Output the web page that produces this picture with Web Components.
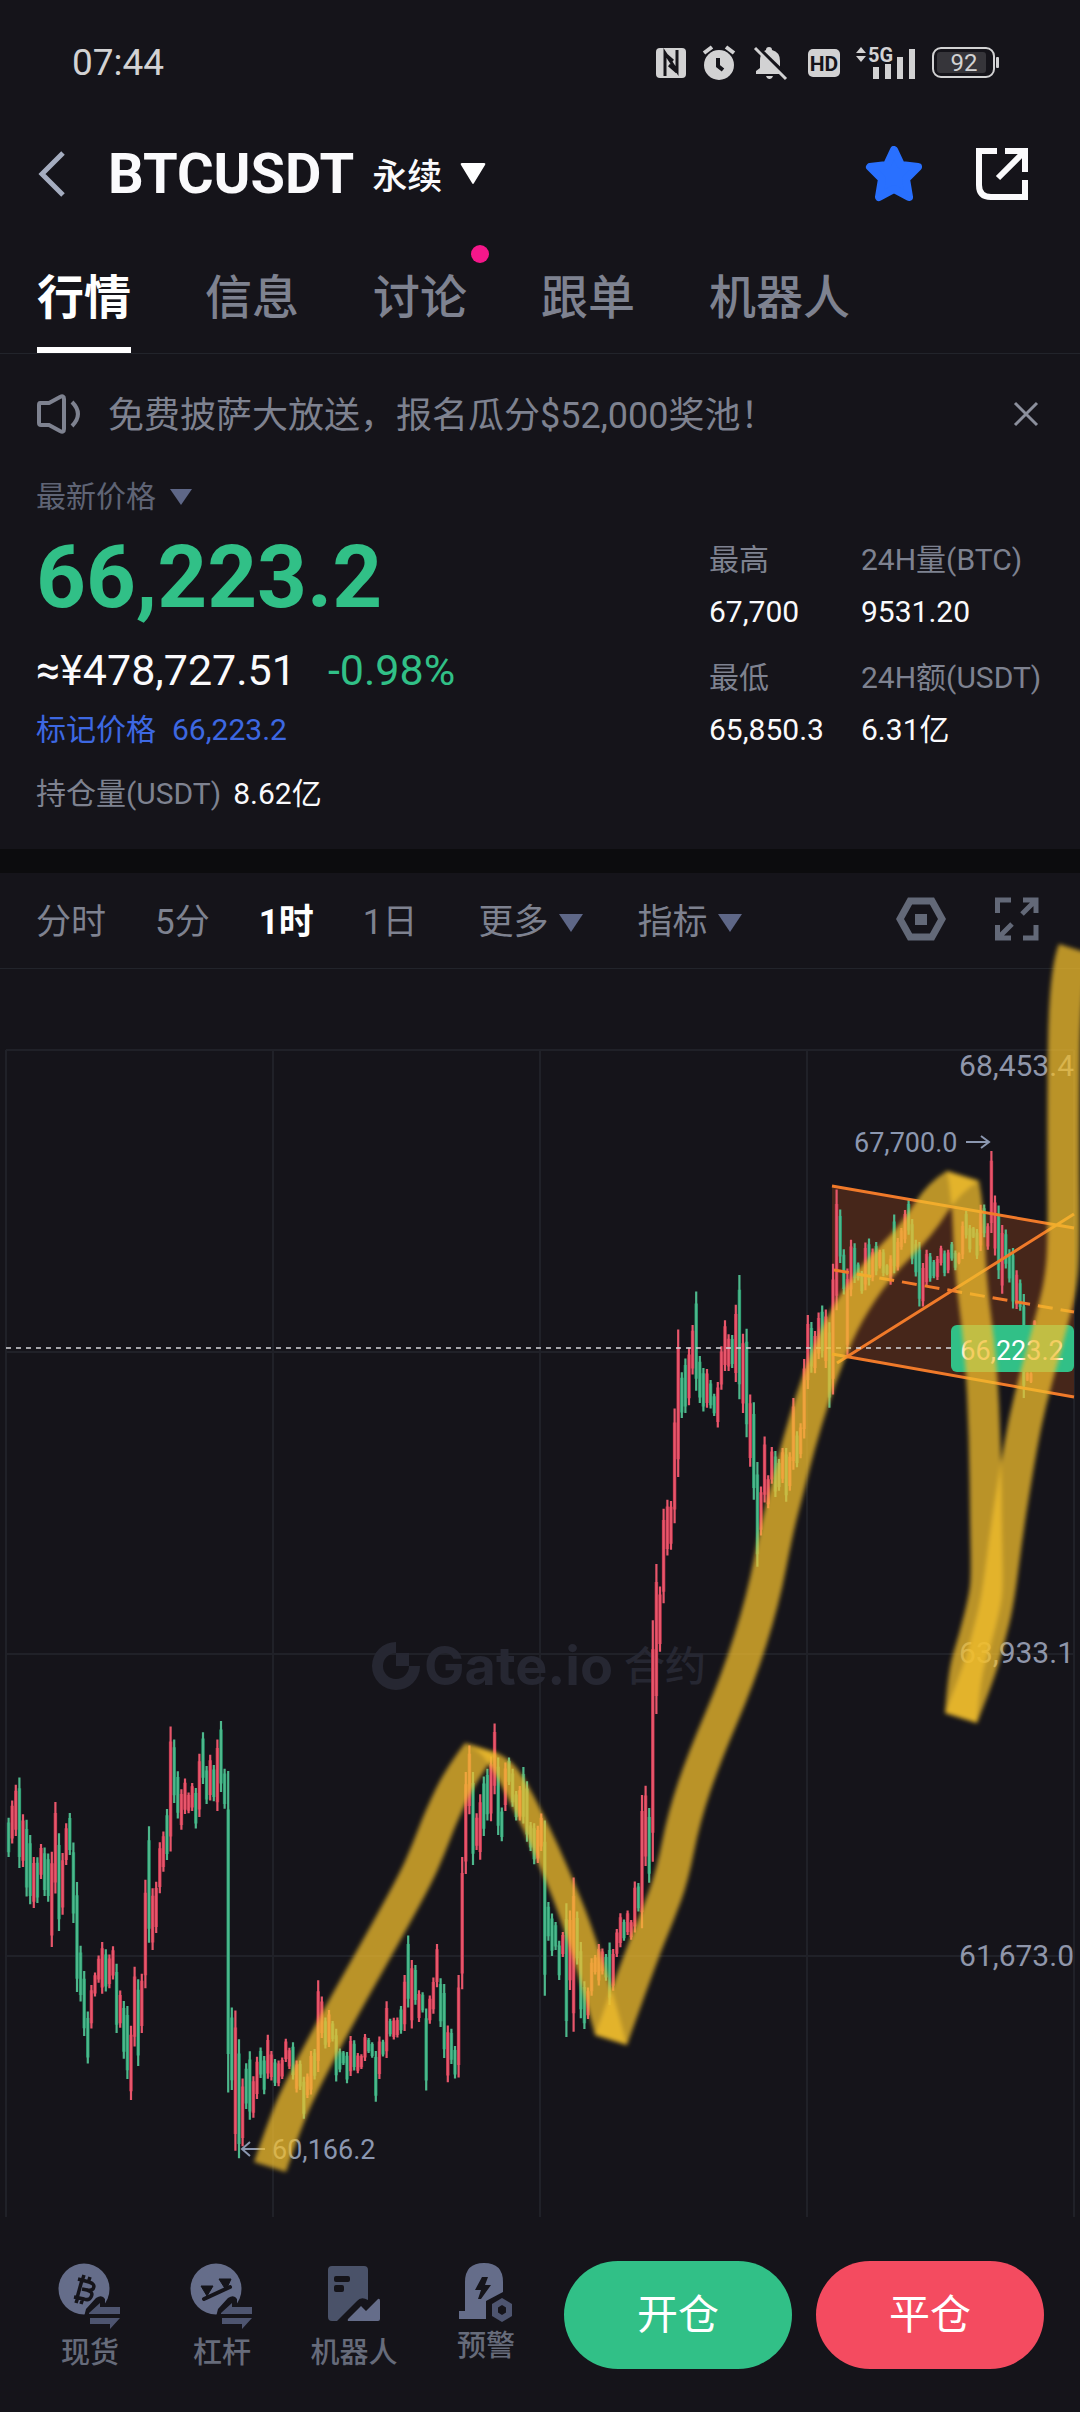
<!DOCTYPE html>
<html lang="zh-CN">
<head>
<meta charset="utf-8">
<meta name="viewport" content="width=device-width">
<title>BTCUSDT 永续</title>
<style>
  html { background: #15141a; }
  body {
    margin: 0;
    color: #fafafc;
    font-family: Roboto, "Noto Sans CJK SC", sans-serif;
    --muted: #7e8290;
    --slate: #5e6787;
    --line: #22242b;
    --up: #31c087;
    --down: #f44b60;
    --pad: 36px;
  }
</style>
</head>
<body>
<trade-screen></trade-screen>
<script>
const base = `
  :host { display: block; }
  * { box-sizing: border-box; }
  svg { display: block; flex: none; }
  button { background: none; border: 0; padding: 0; margin: 0; font: inherit; color: inherit; cursor: pointer; }
  a { color: inherit; text-decoration: none; }
`;
function define(name, css, html, init) {
  customElements.define(name, class extends HTMLElement {
    constructor() {
      super();
      this.attachShadow({ mode: "open" }).innerHTML = `<style>${base}${css}</style>${html}`;
      if (init) init(this.shadowRoot, this);
    }
  });
}

define("trade-screen", `
  :host { overflow-x: clip; }
  .band { height: 24px; background: #0c0c0e; }
`, `
  <status-bar></status-bar>
  <pair-header></pair-header>
  <section-tabs></section-tabs>
  <notice-bar>免费披萨大放送，报名瓜分$52,000奖池！</notice-bar>
  <price-summary></price-summary>
  <div class="band"></div>
  <chart-toolbar></chart-toolbar>
  <price-chart></price-chart>
  <trade-dock></trade-dock>
`);

define("status-bar", `
  :host { display: flex; align-items: center; justify-content: space-between; height: 126px; padding: 0 80px 0 72px; color: #d2d2d3; }
  .time { font-size: 37px; line-height: 48px; }
  .icons { display: flex; align-items: center; gap: 16px; }
  .icons svg { overflow: visible; }
  text { font-family: Roboto, sans-serif; }
`, `
  <span class="time">07:44</span>
  <div class="icons">
    <svg width="30" height="32" viewBox="0 0 30 32" aria-label="NFC"><rect y="1" width="30" height="30" rx="4" fill="#d2d2d3"/><path d="M9 29V6L21 24V3M9 7L17 14M21 25L13 18" stroke="#15141a" stroke-width="3" fill="none"/></svg>
    <svg width="34" height="36" viewBox="0 0 34 36" aria-label="闹钟"><circle cx="17" cy="20" r="15" fill="#d2d2d3"/><path d="M2 8L10 2M32 8L24 2" stroke="#d2d2d3" stroke-width="4"/><path d="M16 13V21L21 25" stroke="#15141a" stroke-width="4" fill="none"/></svg>
    <svg width="36" height="36" viewBox="0 0 36 36" aria-label="静音"><path d="M17 2q3 0 3 3q8 2 8 11v7l4 3v3H4v-3l4-3v-7q0-9 6-11q0-3 3-3zM14 31h7q-1 3-3.500 3t-3.500-3z" fill="#d2d2d3"/><path d="M5 2L36 32" stroke="#15141a" stroke-width="4"/><path d="M3 3L34 34" stroke="#d2d2d3" stroke-width="3"/></svg>
    <svg width="36" height="32" viewBox="-4 0 36 32"><rect y="2" width="32" height="28" rx="5" fill="#d2d2d3"/><text x="16" y="24" font-size="21" font-weight="700" text-anchor="middle" fill="#15141a">HD</text></svg>
    <svg width="60" height="42" viewBox="0 -4 60 42"><path d="M0 7L5 1L10 7zM0 10L5 16L10 10z" fill="#d2d2d3"/><path d="M17 21h6v12h-6zM29 18h6v15h-6zM41 11h6v22h-6zM53 3h6v30h-6z" fill="#d2d2d3"/><text x="12" y="16" font-size="20" font-weight="700" fill="#d2d2d3">5G</text></svg>
    <svg width="68" height="32" viewBox="0 0 68 32"><rect x="1" y="1" width="61" height="29" rx="8" fill="none" stroke="#d2d2d3" stroke-width="2"/><rect x="5" y="5" width="49" height="21" rx="3" fill="#36353a"/><rect x="64" y="10" width="3" height="11" rx="1" fill="#d2d2d3"/><text x="32" y="24" font-size="24" text-anchor="middle" fill="#d2d2d3">92</text></svg>
  </div>
`);

define("pair-header", `
  :host { display: flex; align-items: center; height: 98px; padding: 0 var(--pad) 2px; }
  .pair { display: flex; align-items: center; gap: 18px; margin: 0 auto 0 42px; line-height: 66px; }
  h1 { margin: 0; font-size: 56px; font-weight: 700; line-height: 66px; }
  .kind { font-size: 35px; line-height: 58px; padding-top: 8px; font-weight: 500; }
  .share { margin-left: 53px; margin-right: 16px; }
`, `
  <button aria-label="返回"><svg width="30" height="46" viewBox="0 0 30 46"><path d="M27 2L6 23L27 44" fill="none" stroke="#a5adc0" stroke-width="5"/></svg></button>
  <button class="pair"><h1>BTCUSDT</h1><span class="kind">永续</span><svg width="26" height="22" viewBox="0 0 26 22"><path d="M1 2Q0 0 2 0H24Q26 0 25 2L14 20Q13 22 12 20z" fill="#fff"/></svg></button>
  <button aria-label="收藏"><svg width="58" height="56" viewBox="0 0 58 56"><path d="M29 4L36 19L53 21L41 33L44 51L29 43L14 51L17 33L5 21L22 19z" fill="#2970ff" stroke="#2970ff" stroke-width="8" stroke-linejoin="round"/></svg></button>
  <button class="share" aria-label="分享"><svg width="52" height="52" viewBox="0 0 52 52"><path d="M21 3H3V37Q3 49 15 49H49V32M29 3H49V24M48 4L22 30" fill="none" stroke="#fafafc" stroke-width="6"/></svg></button>
`);

define("tab-item", `
  :host { color: #7e8290; font-size: 47px; font-weight: 500; }
  a { display: block; position: relative; line-height: 60px; padding-bottom: 25px; white-space: nowrap; }
  :host([active]) { color: #fff; font-weight: 700; }
  :host([active]) a { padding-bottom: 19px; border-bottom: 6px solid #fff; }
  :host([dot]) a::after { content: ""; position: absolute; top: -23px; right: -22px; width: 18px; height: 18px; border-radius: 50%; background: #f5178a; }
`, `<a href="#"><slot></slot></a>`);

define("section-tabs", `
  nav { display: flex; gap: 74px; padding: 44px 37px 0; border-bottom: 1px solid var(--line); }
`, `<nav><tab-item active>行情</tab-item><tab-item>信息</tab-item><tab-item dot>讨论</tab-item><tab-item>跟单</tab-item><tab-item>机器人</tab-item></nav>`);

define("notice-bar", `
  :host { display: flex; align-items: center; height: 120px; padding: 0 var(--pad); color: #7e8290; }
  p { flex: 1; margin: 0 0 0 26px; padding-top: 3px; font-size: 36px; line-height: 48px; }
  .close { margin-right: 5px; }
`, `
  <svg width="46" height="40" viewBox="0 0 46 40"><path d="M4 9Q3 9 3 11V29Q3 31 5 31H13L24 37Q28 39 28 35V5Q28 1 24 3L13 9zM36 8Q48 20 36 32" fill="none" stroke="#7e8290" stroke-width="4"/></svg>
  <p><slot></slot></p>
  <button class="close" aria-label="关闭"><svg width="26" height="26" viewBox="0 0 26 26"><path d="M2 2L24 24M24 2L2 24" stroke="#8b8f9c" stroke-width="3"/></svg></button>
`);

define("stat-item", `
  dl, dt, dd { margin: 0; }
  dt, dd { font-size: 30px; line-height: 48px; white-space: nowrap; }
  dt { color: #7e8290; margin-bottom: 4px; }
  dd { color: #fafafc; }
`, `<dl><dt><slot name="label"></slot></dt><dd><slot></slot></dd></dl>`);

define("price-summary", `
  :host { display: flex; padding: 0 var(--pad) 31px; font-size: 30px; line-height: 48px; }
  .main { flex: 1; }
  .pick { display: flex; align-items: center; gap: 14px; line-height: 46px; color: #5f6475; }
  .last { color: var(--up); font-size: 87px; font-weight: 700; line-height: 114px; }
  .fiat { display: flex; gap: 32px; font-size: 43px; line-height: 72px; }
  .fiat b { font-weight: 400; color: var(--up); }
  .mark { display: flex; gap: 16px; color: #3d68e2; }
  .hold { margin-top: 16px; display: flex; gap: 12px; }
  .hold span { color: #7e8290; }
  .stats { width: 335px; padding-top: 62px; display: grid; grid-template-columns: 152px 1fr; row-gap: 18px; align-content: start; }
`, `
  <div class="main">
    <button class="pick">最新价格<svg width="22" height="16" viewBox="0 0 22 16"><path d="M0 0H22L11 16z" fill="#5e6787"/></svg></button>
    <div class="last">66,223.2</div>
    <div class="fiat"><span>≈¥478,727.51</span><b>-0.98%</b></div>
    <div class="mark"><span>标记价格</span><span>66,223.2</span></div>
    <div class="hold"><span>持仓量(USDT)</span>8.62亿</div>
  </div>
  <div class="stats">
    <stat-item><span slot="label">最高</span>67,700</stat-item>
    <stat-item><span slot="label">24H量(BTC)</span>9531.20</stat-item>
    <stat-item><span slot="label">最低</span>65,850.3</stat-item>
    <stat-item><span slot="label">24H额(USDT)</span>6.31亿</stat-item>
  </div>
`);

define("chart-toolbar", `
  :host { display: flex; align-items: center; height: 96px; padding: 0 40px 0 var(--pad); border-bottom: 1px solid var(--line); font-size: 35px; line-height: 48px; color: #7e8290; }
  .frames { display: flex; gap: 49px; flex: 1; padding-top: 4px; }
  .frames [aria-pressed] { color: #fff; font-weight: 700; }
  .menu { display: flex; align-items: center; gap: 10px; margin-left: 12px; }
  .menu + .menu { margin-left: 4px; }
  .tools { display: flex; align-items: center; gap: 48px; padding-bottom: 3px; }
`, `
  <div class="frames">
    <button>分时</button><button>5分</button><button aria-pressed="true">1时</button><button>1日</button>
    <button class="menu">更多<svg width="26" height="18" viewBox="0 0 26 18"><path d="M1 0H25L13 18z" fill="#5e6787"/></svg></button>
    <button class="menu">指标<svg width="26" height="18" viewBox="0 0 26 18"><path d="M1 0H25L13 18z" fill="#5e6787"/></svg></button>
  </div>
  <div class="tools">
    <button aria-label="设置"><svg width="50" height="44" viewBox="0 0 50 44"><path d="M14 4H36L46 22L36 40H14L4 22z" fill="none" stroke="#636978" stroke-width="7"/><path d="M19 17h12v11H19z" fill="#636978"/></svg></button>
    <button aria-label="全屏"><svg width="46" height="44" viewBox="-1 0 46 44"><path d="M2.500 16V3H16M28 3H41V16M40 4L27 17M41 28V41H28M2.500 28V41H16M4 40L17 27" fill="none" stroke="#636978" stroke-width="5"/></svg></button>
  </div>
`);

/* Hourly candles: colour letter, high, low. Each run carries its own start, offset and vertical scale. */
const runs = [
  { x: 8.6, y: 1680, k: 2.904, d: "g400 514,r350 475,r304 453,g283 546,r390 543,g406 629,g450 651,r514 662,g515 648,r476 578,g486 627,g504 644,r499 775,r354 620,g445 729,r502 682,r416 537,g386 508,g472 706,g587 906,g772 934,g845 1034,g963 1114,r886 1012,r849 919,r800 879,r761 911,g782 905,r797 895,r773 870,g824 1025,r902 1010,g932 1100,g947 1159,r1004 1220,r833 1064,g869 1121,r853 1025,r580 895,g425 763,r605 784,r586 735,r471 619,r440 557,g375 523,r135 498,g173 357,g265 402,r317 435,r286 389,r327 387,r299 380,g314 431,r214 398,g152 302,g250 360,r217 350,g247 352,r173 380,g119 325,g258 374,g264 1198,g951 1191,r960 1367,g1043 1389,r1157 1354,g1113 1246,g1078 1277,r1151 1271,r1094 1217,g1067 1156,g1092 1203,r1030 1158,r1077 1163,g1101 1179,r1105 1180,r1096 1159,r1042 1109,r1068 1130,g1052 1160,r1105 1198,g1105 1191,g1152 1274,r1143 1214,r1077 1204,g1072 1160,r872 1138,r919 1040,g980 1070,r958 1066,g990 1050,g1013 1166,g1070 1139,g1077 1118,g1080 1171,r1034 1150,g1046 1134,r1083 1142,r1087 1130,r1028 1106,g1040 1083,g1052 1097,g1077 1225,r1035 1159,g1045 1093,r933 1098,g984 1035,r981 1044,r980 1038,g947 1027,r857 1019,g742 951,r813 1012,g828 943,r901 993,g907 966,g954 1192,r916 998,r864 969,r767 892,g866 1008,g883 1098,r1003 1168,g1013 1115,g1063 1157,r857 1154,r514 898,r267 563,r190 390,g267 537,r387 494,r332 522,g280 453,g258 408,r222 410,r126 332,g225 450,g370 468,r240 380,g225 305,g258 368,g322 408,r308 408,g253 417,g294 470,g412 497,g416 535,r423 531" },
  { x: 541.2, y: 1600, k: 2.529, d: "r540 635,g558 1001,g764 862,g793 900,g814 885,g862 961,r840 903,g767 1105,r785 986,r702 1092,g788 922,g865 1058,g964 1085,r980 1060,r906 1001,r898 947,r870 975,r881 947,g895 963,g866 1024,r883 988,r832 903,r792 878,g808 862,r785 847,r809 859,r712 841,g716 788,r493 830,r470 673,g526 715,r51 662,r-91 288,r-34 131,r-231 8" },
  { x: 667.4, y: 930, k: 2.34, d: "r1333 1464,r1336 1450,r1120 1388,r935 1280,g1035 1142,g1003 1130,r977 1112,r924 1040,g846 1078,g997 1107,g1025 1127,r1027 1118,g1053 1120,g1085 1137,r1058 1164,r974 1076,r913 1032,r946 1032,g948 1025,r877 1058,g807 1098,r945 1130,g933 1187,r1087 1256,g1105 1333,g1245 1490,r1302 1417,r1185 1340,r1276 1353,r1210 1296,g1219 1327,g1238 1312,r1212 1294,g1212 1338,r1222 1312,r1095 1263,g1173 1257,r1154 1236,r1004 1190,r901 1074,g917 1036,r938 1037,r895 1004,g879 1000,r888 1025,g918 1118,r781 1087,r607 890,g654 779,g747 853,r792 995,r725 857,g733 826,g778 820,g798 851,r731 843,g722 832,r745 822,g730 808,r748 792,g747 810,g782 808,r761 830,g666 803,r721 797,r697 748,r655 733,g631 713,g676 782,g725 811,g730 881,r779 881,r748 834,g756 823,g772 815,r763 819,r739 785,g750 810,r748 803,g730 774,g750 796,r755 782,r682 770,g657 722,g690 755,g695 721,g700 770,r643 751,g642 719,r686 748,r517 709,r621 762,g645 817,r690 851,g701 792,g747 825,g744 886,r796 887,g818 891,g852 1095,r1035 1055,r1035 1060,r913 935" }
];
const STEP = 3.6;
function candlePaths() {
  const wick = { r: "", g: "" }, body = { r: "", g: "" };
  for (const run of runs) {
    run.d.split(",").forEach((c, i) => {
      const side = c[0], [hi, lo] = c.slice(1).split(" ").map(v => run.y + v / run.k);
      const x = (run.x + STEP * i).toFixed(1), inset = (lo - hi) * 0.12;
      wick[side] += `M${x} ${hi.toFixed(1)}V${lo.toFixed(1)}`;
      body[side] += `M${x} ${(hi + inset).toFixed(1)}V${(lo - inset).toFixed(1)}`;
    });
  }
  return `<g fill="none"><path d="${body.g}" stroke="#1c8a60" stroke-width="3.500"/><path d="${body.r}" stroke="#b43048" stroke-width="3.500"/>
    <path d="${wick.g}" stroke="#4db88c" stroke-width="2.200"/><path d="${wick.r}" stroke="#e8566b" stroke-width="2.200"/></g>`;
}
/* Highlighter: a flat nib of half-size (16, 5) swept along each centre line. */
const marks = [
  [[270,2167],[285,2123],[303,2083],[341,2012],[375,1952],[415,1880],[429,1848],[442,1814],[462,1773],[481,1748]],
  [[481,1748],[494,1754],[510,1776],[526,1807],[542,1840],[558,1877],[574,1916],[596,1984],[611,2040]],
  [[611,2040],[641,1956],[658,1915],[672,1877],[684,1817],[704,1758],[738,1679],[763,1600],[777,1528],[788,1486],[799,1443],[812,1400],[827,1357],[846,1315],[875,1272],[917,1230],[944,1187],[963,1176]],
  [[963,1176],[968,1203],[970,1272],[981,1357],[985,1443],[986,1528],[987,1580],[985,1600],[975,1640],[964,1675],[961,1718]],
  [[961,1718],[978,1675],[988,1640],[998,1600],[1007,1528],[1021,1443],[1030,1400],[1042,1357],[1053,1315],[1060,1288],[1064,1250],[1063,1127],[1065,973],[1075,949]]
];
function markPaths() {
  return marks.map(m => {
    /* midpoints are the knots of a quadratic curve, so each edge stays smooth */
    const edge = (pts, dx, dy) => {
      const p = pts.map(([x, y]) => [x + dx, y + dy]);
      let s = `${p[0]}`;
      for (let i = 1; i < p.length - 1; i++) {
        const end = i === p.length - 2 ? p[i + 1] : [(p[i][0] + p[i + 1][0]) / 2, (p[i][1] + p[i + 1][1]) / 2];
        s += `Q${p[i]} ${end}`;
      }
      return s;
    };
    return `<path d="M${edge(m, -16, -5)}L${edge([...m].reverse(), 16, 5)}Z"/>`;
  }).join("");
}

define("price-chart", `
  svg { width: 100%; height: auto; overflow: visible; pointer-events: none; position: relative; }
  text { font-family: Roboto, "Noto Sans CJK SC", sans-serif; }
`, `<svg viewBox="0 969 1080 1248" role="img" aria-label="BTCUSDT 1时 K线">
  <defs><filter id="soft" x="-10%" y="-10%" width="120%" height="120%"><feGaussianBlur stdDeviation="2"/></filter></defs>
  <path d="M6 1050V2217M273 1050V2217M540 1050V2217M807 1050V2217M1074 1050V2217M6 1050H1074M6 1352H1074M6 1654H1074M6 1956H1074" stroke="#202128" stroke-width="2" fill="none"/>
  <g fill="#262732">
    <path d="M396 1642A24 24 0 1 0 420 1666H409A13 13 0 1 1 396 1653z"/><path d="M396 1653h13v13h-13z"/>
    <text x="424" y="1685" font-size="54" font-weight="700" style="font-family:Inter,sans-serif">Gate.io</text>
    <text x="624" y="1681" font-size="41" font-weight="500">合约</text>
  </g>
  <path d="M832 1186L1074 1228V1397L832 1354z" fill="#46261a"/>
  ${candlePaths()}
  <g stroke="#f07a2a" stroke-width="3" fill="none"><path d="M832 1186L1074 1228M832 1354L1074 1397M837 1363L1074 1214"/><path d="M834 1270L1074 1312" stroke-dasharray="15 8"/></g>
  <path d="M6 1348H951" stroke="#d5d5da" stroke-width="1.500" stroke-dasharray="5 5"/>
  <g fill="#8f96aa" font-size="30" text-anchor="end">
    <text x="1074" y="1076">68,453.4</text><text x="1074" y="1663">63,933.1</text><text x="1074" y="1966">61,673.0</text>
  </g>
  <g fill="#8b97b0" font-size="27">
    <text x="854" y="1152">67,700.0</text><text x="272" y="2159">60,166.2</text>
  </g>
  <path d="M966 1142H989M981 1136L989 1142L981 1148M265 2149H242M250 2142L242 2149L250 2156" stroke="#8b97b0" stroke-width="2" fill="none"/>
  <rect x="951" y="1325" width="123" height="47" rx="6" fill="#31c087"/>
  <text x="1012" y="1360" font-size="27" text-anchor="middle" fill="#fff">66,223.2</text>
  <g fill="#f2be2f" fill-opacity=".75" filter="url(#soft)">${markPaths()}</g>
</svg>`);

define("dock-link", `
  :host { width: 132px; }
  a { display: flex; flex-direction: column; align-items: center; color: #666b7a; font-size: 29px; line-height: 36px; font-weight: 500; white-space: nowrap; }
  ::slotted(svg) { display: block; margin-bottom: 6px; }
`, `<a href="#"><slot name="icon"></slot><slot></slot></a>`);

define("trade-dock", `
  :host { display: flex; align-items: center; height: 195px; padding: 0 var(--pad) 0 24px; }
  nav { display: flex; align-items: flex-end; padding-top: 2px; }
  .act { flex: 1; height: 108px; border-radius: 54px; font-size: 41px; line-height: 60px; color: #fff; margin-left: 12px; }
  .act + .act { margin-left: 24px; }
  .open { background: var(--up); }
  .close { background: var(--down); }
  .alert { margin-bottom: 7px; }
`, `
  <nav>
    <dock-link><svg slot="icon" width="64" height="66" viewBox="0 0 64 66"><circle cx="26" cy="26" r="25.500" fill="#656d8a"/><path d="M20 16L31 19Q38 21 35 26Q33 28 29 27L24 26M29 27Q36 29 33 34Q31 38 26 36L16 34M24 17L19 35M26 12L24 18M32 14L30 20M20 34L18 40M25 35L23 41" fill="none" stroke="#15141a" stroke-width="3.500"/><path d="M26 54L28 46L38 35Q44 31 47 36V42H66V54z" fill="#15141a"/><path d="M31 50L42 40V44H62V51H31zM32 55H62L52 66V61H32z" fill="#4e5570"/></svg>现货</dock-link>
    <dock-link><svg slot="icon" width="64" height="66" viewBox="0 0 64 66"><circle cx="26" cy="26" r="25.500" fill="#656d8a"/><path d="M14 36L40 24" stroke="#15141a" stroke-width="4" stroke-linecap="round"/><path d="M11 23H23L17 33zM29 16H41L36 27z" fill="#15141a" stroke="#15141a" stroke-linejoin="round"/><path d="M26 54L28 46L38 35Q44 31 47 36V42H66V54z" fill="#15141a"/><path d="M31 50L42 40V44H62V51H31zM32 55H62L52 66V61H32z" fill="#4e5570"/></svg>杠杆</dock-link>
    <dock-link><svg slot="icon" width="54" height="66" viewBox="0 0 54 66"><path d="M5 3H37Q41 3 41 7V37Q34 33 30 38L10 58H5Q1 58 1 54V7Q1 3 5 3z" fill="#4a5269"/><path d="M9 13h12q2 0 2 2v2q0 2-2 2H9q-2 0-2-2v-2q0-2 2-2zM9 22h6q2 0 2 2v3q0 2-2 2H9q-2 0-2-2v-3q0-2 2-2z" fill="#15141a"/><path d="M21 56L34 43L39 48L51 36Q53 35 53 38V56Q53 58 51 58H22Q20 58 21 56z" fill="#656d8a"/></svg>机器人</dock-link>
    <dock-link class="alert"><svg slot="icon" width="56" height="62" viewBox="0 0 56 62"><path d="M7 51V22Q7 3 26 3T45 22V32L28 41V59H1V51z" fill="#656d8a"/><path d="M24 17H30L27 25H33L23 39H20L23 30H17z" fill="#15141a"/><path d="M44 38L54 44V56L44 62L34 56V44z" fill="#4e5570"/><path d="M44 45L48 47.500V52.500L44 55L40 52.500V47.500z" fill="#15141a"/></svg>预警</dock-link>
  </nav>
  <button class="act open">开仓</button><button class="act close">平仓</button>
`);
</script>
</body>
</html>
